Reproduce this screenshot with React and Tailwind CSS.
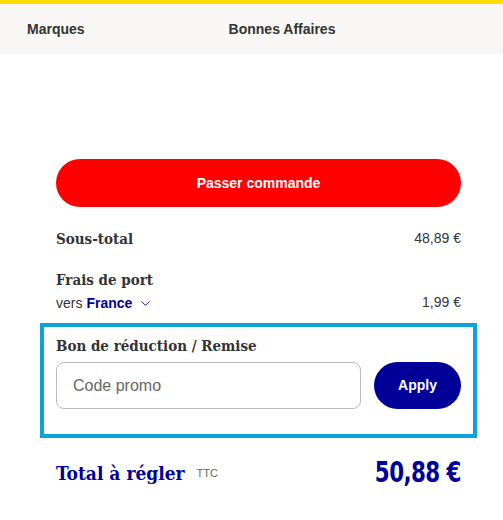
import { ChevronDown } from "lucide-react";

const slab = "font-['DejaVu_Serif_Condensed','DejaVu_Serif',serif] font-bold";

export default function App() {
  return (
    <div className="w-[503px] h-[520px] bg-white overflow-hidden font-['Liberation_Sans',Arial,sans-serif]">
      <div className="h-1 bg-[#ffdd00]" />
      <nav className="h-[50px] bg-[#f8f7f5] flex items-center text-[14px] font-bold text-[#333]">
        <span className="ml-[27px]">Marques</span>
        <span className="ml-[144px]">Bonnes Affaires</span>
      </nav>

      <div className="pl-[56px] pr-[42px] pt-[105px]">
        <button className="w-full h-[48px] rounded-full bg-[#ff0000] text-white font-bold text-[14px]">
          Passer commande
        </button>

        <div className="mt-[21px] flex justify-between items-end">
          <div className={`${slab} text-[15px] text-[#333] leading-5`}>Sous-total</div>
          <div className="text-[14px] text-[#333]">48,89 €</div>
        </div>

        <div className="mt-[21px] flex justify-between items-end">
          <div>
            <div className={`${slab} text-[15px] text-[#333] leading-5`}>Frais de port</div>
            <div className="mt-[3px] text-[14px] text-[#333] flex items-center gap-1">
              vers <span className="font-bold text-[#000099]">France</span>
              <ChevronDown size={15} strokeWidth={1.5} className="text-[#000099] ml-[2px]" />
            </div>
          </div>
          <div className="text-[14px] text-[#333] pb-[1px]">1,99 €</div>
        </div>

        <section className="-mx-4 mt-[9px] border-4 border-[#0aa3df] px-3 pt-[9px] pb-[25px]">
          <h3 className={`${slab} text-[15px] text-[#333] leading-5`}>
            Bon de réduction / Remise
          </h3>
          <div className="flex gap-[13px] mt-[6px]">
            <input
              placeholder="Code promo"
              className="flex-1 min-w-0 h-[47px] rounded-lg border border-[#bbb] px-4 text-[16px] placeholder:text-[#666] outline-none"
            />
            <button className="w-[87px] h-[47px] rounded-full bg-[#000099] text-white font-bold text-[14px]">
              Apply
            </button>
          </div>
        </section>

        <div className="flex justify-between items-center mt-[13px]">
          <div className="flex items-center gap-3">
            <span className={`${slab} text-[19px] text-[#000099]`}>Total à régler</span>
            <span className="text-[11px] text-[#666]">TTC</span>
          </div>
          <span className="font-['DejaVu_Sans_Condensed','DejaVu_Sans',sans-serif] font-bold text-[29px] text-[#000099] tracking-tight origin-right scale-x-[0.82]">
            50,88 €
          </span>
        </div>
      </div>
    </div>
  );
}
